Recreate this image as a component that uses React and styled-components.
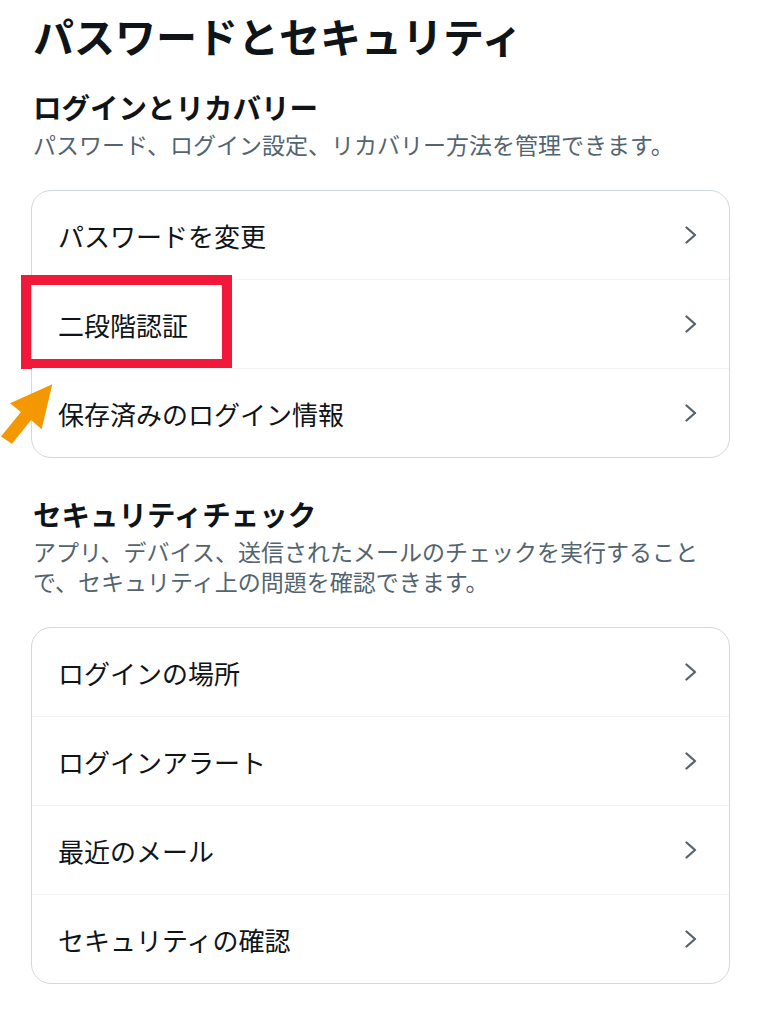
import React from "react";
import styled, { createGlobalStyle } from "styled-components";

const GlobalStyle = createGlobalStyle`
    body {
        margin: 0;
        background-color: #ffffff;
        font-family: "Noto Sans CJK JP", "Noto Sans", sans-serif;
        color: #0f1419;
    }
`;

const Page = styled.div`
    width: 759px;
    box-sizing: border-box;
    padding: 11px 29px 40px 31px;
`;

const Title = styled.h1`
    margin: 0 0 30px 2px;
    font-size: 41px;
    line-height: 48px;
    font-weight: 700;
    color: #0f1419;
`;

const Section = styled.section`
    margin-bottom: 38px;
`;

const Heading = styled.h2`
    margin: 0 0 4px 2px;
    font-size: 28.5px;
    line-height: 36px;
    font-weight: 700;
    color: #0f1419;
`;

const Description = styled.p`
    margin: 0 0 31px 2px;
    font-size: 23px;
    line-height: 30px;
    color: #536471;
`;

const Card = styled.div`
    position: relative;
    border: 1px solid #cfd9de;
    border-radius: 20px;
`;

const Row = styled.div`
    position: relative;
    display: flex;
    align-items: center;
    justify-content: space-between;
    height: 88px;
    padding: 0 32px 0 26px;
    border-top: ${(p) => (p.$first ? "none" : "1px solid #eff3f4")};
    font-size: 26px;
    color: #0f1419;
`;

const Highlight = styled.span`
    position: absolute;
    left: -11px;
    top: -5px;
    width: 211px;
    height: 94px;
    box-sizing: border-box;
    border: 10px solid #f2183a;
`;

const Pointer = styled.svg`
    position: absolute;
    left: -32px;
    top: 189px;
    width: 56px;
    height: 70px;
`;

const Chevron = () => (
    <svg width="12" height="18" viewBox="0 0 12 18">
        <polyline
            points="1.5,1.5 10,9 1.5,16.5"
            fill="none"
            stroke="#536471"
            strokeWidth="2.3"
            strokeLinecap="round"
            strokeLinejoin="round"
        />
    </svg>
);

const loginItems = ["パスワードを変更", "二段階認証", "保存済みのログイン情報"];
const checkItems = ["ログインの場所", "ログインアラート", "最近のメール", "セキュリティの確認"];

const App = () => {
    return (
        <Page>
            <GlobalStyle />
            <Title>パスワードとセキュリティ</Title>

            <Section>
                <Heading>ログインとリカバリー</Heading>
                <Description>パスワード、ログイン設定、リカバリー方法を管理できます。</Description>
                <Card>
                    {loginItems.map((item, i) => (
                        <Row key={item} $first={i === 0}>
                            <span>{item}</span>
                            <Chevron />
                            {item === "二段階認証" && <Highlight />}
                        </Row>
                    ))}
                    <Pointer viewBox="0 0 56 70">
                        <polygon
                            points="52.3,4.3 10,23.3 20.9,31.9 1,56.5 12,63.7 31.1,40.1 41.7,49.3"
                            fill="#f39800"
                        />
                    </Pointer>
                </Card>
            </Section>

            <Section>
                <Heading>セキュリティチェック</Heading>
                <Description>
                    アプリ、デバイス、送信されたメールのチェックを実行することで、セキュリティ上の問題を確認できます。
                </Description>
                <Card>
                    {checkItems.map((item, i) => (
                        <Row key={item} $first={i === 0}>
                            <span>{item}</span>
                            <Chevron />
                        </Row>
                    ))}
                </Card>
            </Section>
        </Page>
    );
};

export default App;
